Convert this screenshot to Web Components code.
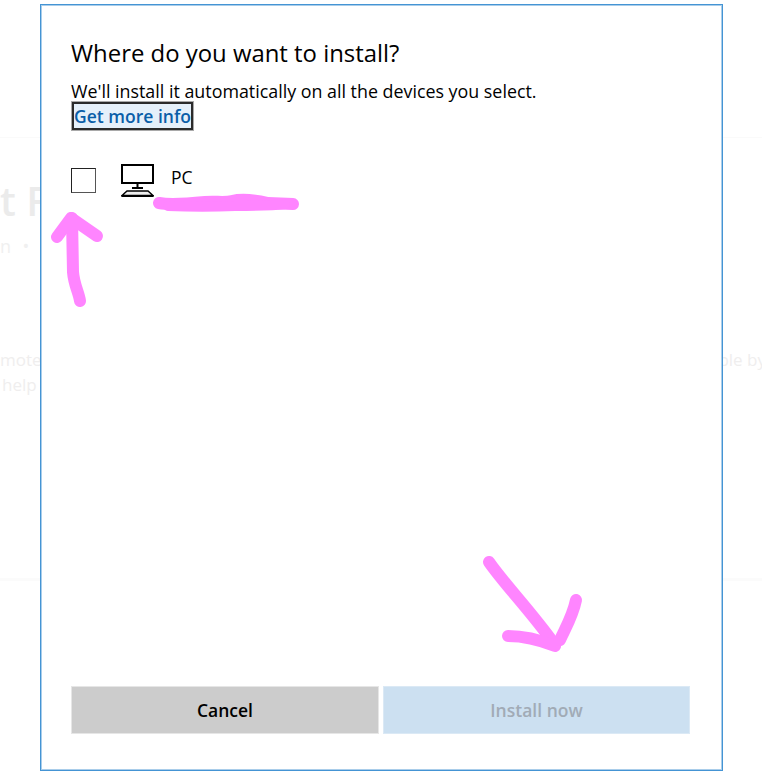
<!DOCTYPE html>
<html>
<head>
<meta charset="utf-8">
<title>Where do you want to install?</title>
<style>
  html, body { margin: 0; height: 100%; background: #fff; }
  body { font-family: "Open Sans", "Noto Sans", sans-serif; }
</style>
</head>
<body>
<store-page>
  <install-dialog title-text="Where do you want to install?">
    <span slot="lead">We'll install it automatically on all the devices you select.</span>
    <device-row name="PC"></device-row>
  </install-dialog>
  <ink-marks></ink-marks>
</store-page>

<script>
// page behind the dialog, only its edges show
class StorePage extends HTMLElement {
  connectedCallback() {
    this.attachShadow({ mode: 'open' });
    this.shadowRoot.innerHTML = `
      <style>
        :host {
          display: block;
          position: relative;
          width: 762px;
          height: 773px;
          overflow: hidden;
          background: #fff;
          color: #efeeee;
        }
        .page {
          display: flex;
          flex-direction: column;
          height: 100%;
          box-sizing: border-box;
          padding-top: 137px;
        }
        .head {
          border-top: 1px solid #fafafa;
          padding-top: 38px;
          height: 210px;
          box-sizing: border-box;
        }
        .big { font-size: 40px; line-height: 50px; font-weight: 600; color: #ebebeb; white-space: nowrap; }
        .sub { font-size: 18px; line-height: 24px; margin-top: 8px; color: #f0f0f0; white-space: nowrap; word-spacing: 1px; }
        .para {
          display: flex;
          justify-content: space-between;
          font-size: 17px;
          line-height: 25px;
          height: 231px;
          white-space: nowrap;
          border-bottom: 3px solid #fbfbfb;
        }
        .para p { margin: 0; }
        .para p:last-child { margin-right: -4px; }
        .para span { padding-left: 2px; }
      </style>
      <div class="page">
        <div class="head">
          <div class="big">t F</div>
          <div class="sub">n &nbsp;•</div>
        </div>
        <div class="para">
          <p>mote<br><span>help</span></p>
          <p>ple by</p>
        </div>
      </div>
      <slot></slot>
    `;
  }
}
customElements.define('store-page', StorePage);

class InstallDialog extends HTMLElement {
  connectedCallback() {
    this.attachShadow({ mode: 'open' });
    this.shadowRoot.innerHTML = `
      <style>
        :host {
          display: flex;
          flex-direction: column;
          position: absolute;
          left: 40px;
          top: 4px;
          width: 683px;
          height: 767px;
          box-sizing: border-box;
          border: 1px solid #4494d4;
          box-shadow: inset 0 0 0 1px #a9cdea;
          background: #fff;
          padding: 31px 32px 36px 30px;
          color: #000;
          font-family: "Open Sans", "Noto Sans", sans-serif;
        }
        h1 {
          margin: 0;
          font-size: 23.9px;
          line-height: 34px;
          font-weight: 400;
        }
        .lead {
          margin-top: 9px;
          font-size: 17.85px;
          line-height: 24px;
        }
        a {
          display: block;
          box-sizing: border-box;
          width: 121px;
          height: 28px;
          margin: -1px 0 0 1px;
          border: 2px solid #2b2b2b;
          box-shadow: 0 0 0 1px #a9a9a9;
          background: #e5f0fa;
          color: #0a5ea8;
          font-size: 17.5px;
          line-height: 24px;
          font-weight: 600;
          text-align: center;
          white-space: nowrap;
          text-decoration: none;
        }
        .devices { flex: 1; padding-top: 34px; }
        .actions {
          display: grid;
          grid-template-columns: 308px 307px;
          gap: 4px;
        }
      </style>
      <h1>${this.getAttribute('title-text')}</h1>
      <div class="lead"><slot name="lead"></slot></div>
      <a href="#">Get more info</a>
      <div class="devices"><slot></slot></div>
      <div class="actions">
        <dialog-button>Cancel</dialog-button>
        <dialog-button primary disabled>Install now</dialog-button>
      </div>
    `;
  }
}
customElements.define('install-dialog', InstallDialog);

class DeviceRow extends HTMLElement {
  connectedCallback() {
    this.attachShadow({ mode: 'open' });
    this.shadowRoot.innerHTML = `
      <style>
        :host {
          display: flex;
          align-items: flex-start;
          color: #000;
        }
        .box {
          width: 25px;
          height: 25px;
          box-sizing: border-box;
          border: 1px solid #222;
          border-bottom-color: #555;
          border-right-color: #555;
          margin-top: 4px;
          background: #fff;
        }
        svg { display: block; margin-left: 25px; }
        .name {
          margin-left: 17px;
          font-size: 17.5px;
          line-height: 22px;
          margin-top: 2px;
        }
      </style>
      <div class="box"></div>
      <svg width="33" height="33" viewBox="0 0 33 33" fill="none" stroke="#000">
        <rect x="1" y="1" width="31" height="18" stroke-width="2"/>
        <path d="M16.5 20v4" stroke-width="2"/>
        <path d="M11 24h11" stroke-width="2"/>
        <path d="M6 27h21l5 4.500H1z" stroke-width="1.500" fill="#eee"/>
        <path d="M0.500 32h32" stroke-width="2"/>
      </svg>
      <span class="name">${this.getAttribute('name')}</span>
    `;
  }
}
customElements.define('device-row', DeviceRow);

class DialogButton extends HTMLElement {
  connectedCallback() {
    this.attachShadow({ mode: 'open' });
    this.shadowRoot.innerHTML = `
      <style>
        :host {
          display: flex;
          align-items: center;
          justify-content: center;
          height: 48px;
          box-sizing: border-box;
          border: 1px solid #e6e6e6;
          background: #cccccc;
          color: #000;
          font-size: 17.5px;
          font-weight: 600;
        }
        :host([primary]) {
          background: #cce0f1;
          border-color: #dbe9f5;
          color: #a1abb6;
        }
      </style>
      <slot></slot>
    `;
  }
}
customElements.define('dialog-button', DialogButton);

// pink pen strokes drawn on top of the screenshot
class InkMarks extends HTMLElement {
  connectedCallback() {
    this.attachShadow({ mode: 'open' });
    this.shadowRoot.innerHTML = `
      <style>
        :host { position: absolute; inset: 0; display: block; pointer-events: none; }
        svg { display: block; }
      </style>
      <svg width="762" height="773" fill="none" stroke="#ff85ff" stroke-width="12" stroke-linecap="round" stroke-linejoin="round">
        <path d="M159 203C170 205 195 203 205 202C215 201 225 203 232 201C240 199 255 200 268 203L293 204"/>
        <path d="M168 206C190 207 215 207 235 206C250 206 270 206 285 204" stroke-width="10"/>
        <path d="M80 301C79 293 74 285 73 272L72 218"/>
        <path d="M57 237L71 218L97 236"/>
        <path d="M489 562C505 585 530 610 555 645"/>
        <path d="M508 636C525 636 540 640 555 646"/>
        <path d="M576 600C573 615 567 625 560 640"/>
      </svg>
    `;
  }
}
customElements.define('ink-marks', InkMarks);
</script>
</body>
</html>
